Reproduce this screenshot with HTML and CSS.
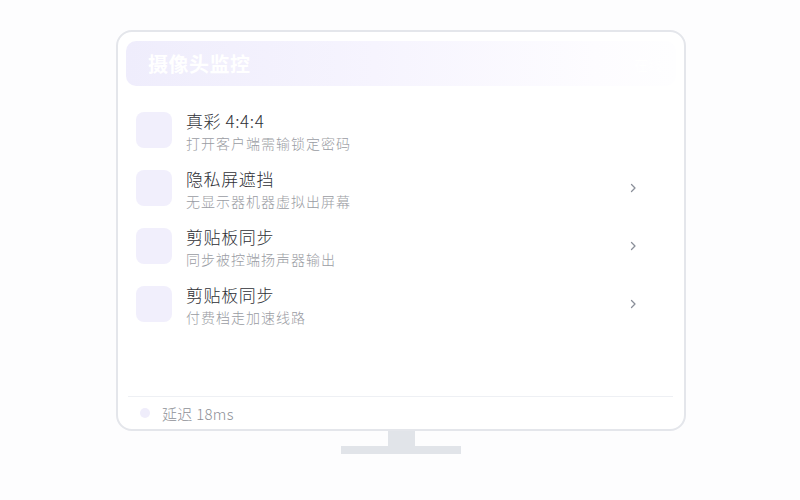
FILE: index.html
```html
<!DOCTYPE html>
<html lang="zh">
<head>
<meta charset="utf-8">
<link rel="stylesheet" href="styles.css">
</head>
<body>
<div class="stage">
  <div class="monitor">
    <div class="header">
      <span class="title">摄像头监控</span>
      <span class="status">在线</span>
    </div>
    <div class="list">
      <div class="row">
        <div class="icon"></div>
        <div class="text">
          <div class="name">真彩 4:4:4</div>
          <div class="desc">打开客户端需输锁定密码</div>
        </div>
      </div>
      <div class="row">
        <div class="icon"></div>
        <div class="text">
          <div class="name">隐私屏遮挡</div>
          <div class="desc">无显示器机器虚拟出屏幕</div>
        </div>
        <svg class="chev" width="8" height="12" viewBox="0 0 8 12"><path d="M2.5 2.5l3.5 3.5-3.5 3.5" fill="none" stroke="#8a8f99" stroke-width="1.3" stroke-linecap="round" stroke-linejoin="round"/></svg>
      </div>
      <div class="row">
        <div class="icon"></div>
        <div class="text">
          <div class="name">剪贴板同步</div>
          <div class="desc">同步被控端扬声器输出</div>
        </div>
        <svg class="chev" width="8" height="12" viewBox="0 0 8 12"><path d="M2.5 2.5l3.5 3.5-3.5 3.5" fill="none" stroke="#8a8f99" stroke-width="1.3" stroke-linecap="round" stroke-linejoin="round"/></svg>
      </div>
      <div class="row">
        <div class="icon"></div>
        <div class="text">
          <div class="name">剪贴板同步</div>
          <div class="desc">付费档走加速线路</div>
        </div>
        <svg class="chev" width="8" height="12" viewBox="0 0 8 12"><path d="M2.5 2.5l3.5 3.5-3.5 3.5" fill="none" stroke="#8a8f99" stroke-width="1.3" stroke-linecap="round" stroke-linejoin="round"/></svg>
      </div>
    </div>
    <div class="footer">
      <span class="dot"></span>
      <span class="latency">延迟 18ms</span>
    </div>
  </div>
  <div class="neck"></div>
  <div class="base"></div>
</div>
</body>
</html>
```
FILE: styles.css
```css
* { box-sizing: border-box; }
html, body { margin: 0; padding: 0; }
body {
  background: #fdfdfe;
  font-family: "Noto Sans CJK SC", "Noto Sans", sans-serif;
  width: 800px;
  height: 500px;
  overflow: hidden;
}
.stage {
  width: 570px;
  margin: 30px 0 0 116px;
  display: flex;
  flex-direction: column;
  align-items: center;
}
.monitor {
  width: 570px;
  height: 401px;
  border: 2px solid #e4e6eb;
  border-radius: 16px;
  background: #ffffff;
  padding: 9px 8px 0 8px;
  display: flex;
  flex-direction: column;
}
.header {
  height: 45px;
  border-radius: 10px;
  background: linear-gradient(90deg, #efedfc 0%, #f6f4fe 45%, #fdfcff 85%, #fefeff 100%);
  display: flex;
  align-items: center;
  justify-content: space-between;
  padding: 0 14px 0 22px;
  flex-shrink: 0;
}
.title {
  color: #ffffff;
  font-size: 20px;
  font-weight: 700;
  line-height: 24px;
  letter-spacing: 0.5px;
}
.status {
  color: #ffffff;
  font-size: 14px;
}
.list {
  flex: 1;
  margin-top: 15px;
  display: flex;
  flex-direction: column;
}
.row {
  height: 58px;
  padding: 11px 39px 11px 10px;
  display: flex;
  align-items: flex-start;
}
.icon {
  width: 36px;
  height: 36px;
  border-radius: 8px;
  background: #f1effc;
  flex-shrink: 0;
}
.text {
  margin-left: 14px;
  flex: 1;
}
.name {
  font-size: 17px;
  line-height: 20px;
  letter-spacing: 0.6px;
  font-weight: 300;
  color: #2e3036;
  margin-top: -1px;
}
.desc {
  font-size: 14px;
  line-height: 18px;
  letter-spacing: 1px;
  font-weight: 300;
  margin-top: 3px;
  color: #9a9ca3;
}
.chev {
  align-self: center;
  flex-shrink: 0;
}
.footer {
  height: 33px;
  margin: 0 3px 0 2px;
  border-top: 1px solid #eef0f4;
  display: flex;
  align-items: center;
  padding-left: 12px;
}
.dot {
  width: 10px;
  height: 10px;
  border-radius: 50%;
  background: #efedfb;
}
.latency {
  margin-left: 12px;
  font-size: 15px;
  letter-spacing: 0.3px;
  font-weight: 300;
  color: #8e9097;
}
.neck {
  width: 27px;
  height: 15px;
  background: #e1e4e9;
}
.base {
  width: 120px;
  height: 8px;
  background: #e1e4e9;
}
```
